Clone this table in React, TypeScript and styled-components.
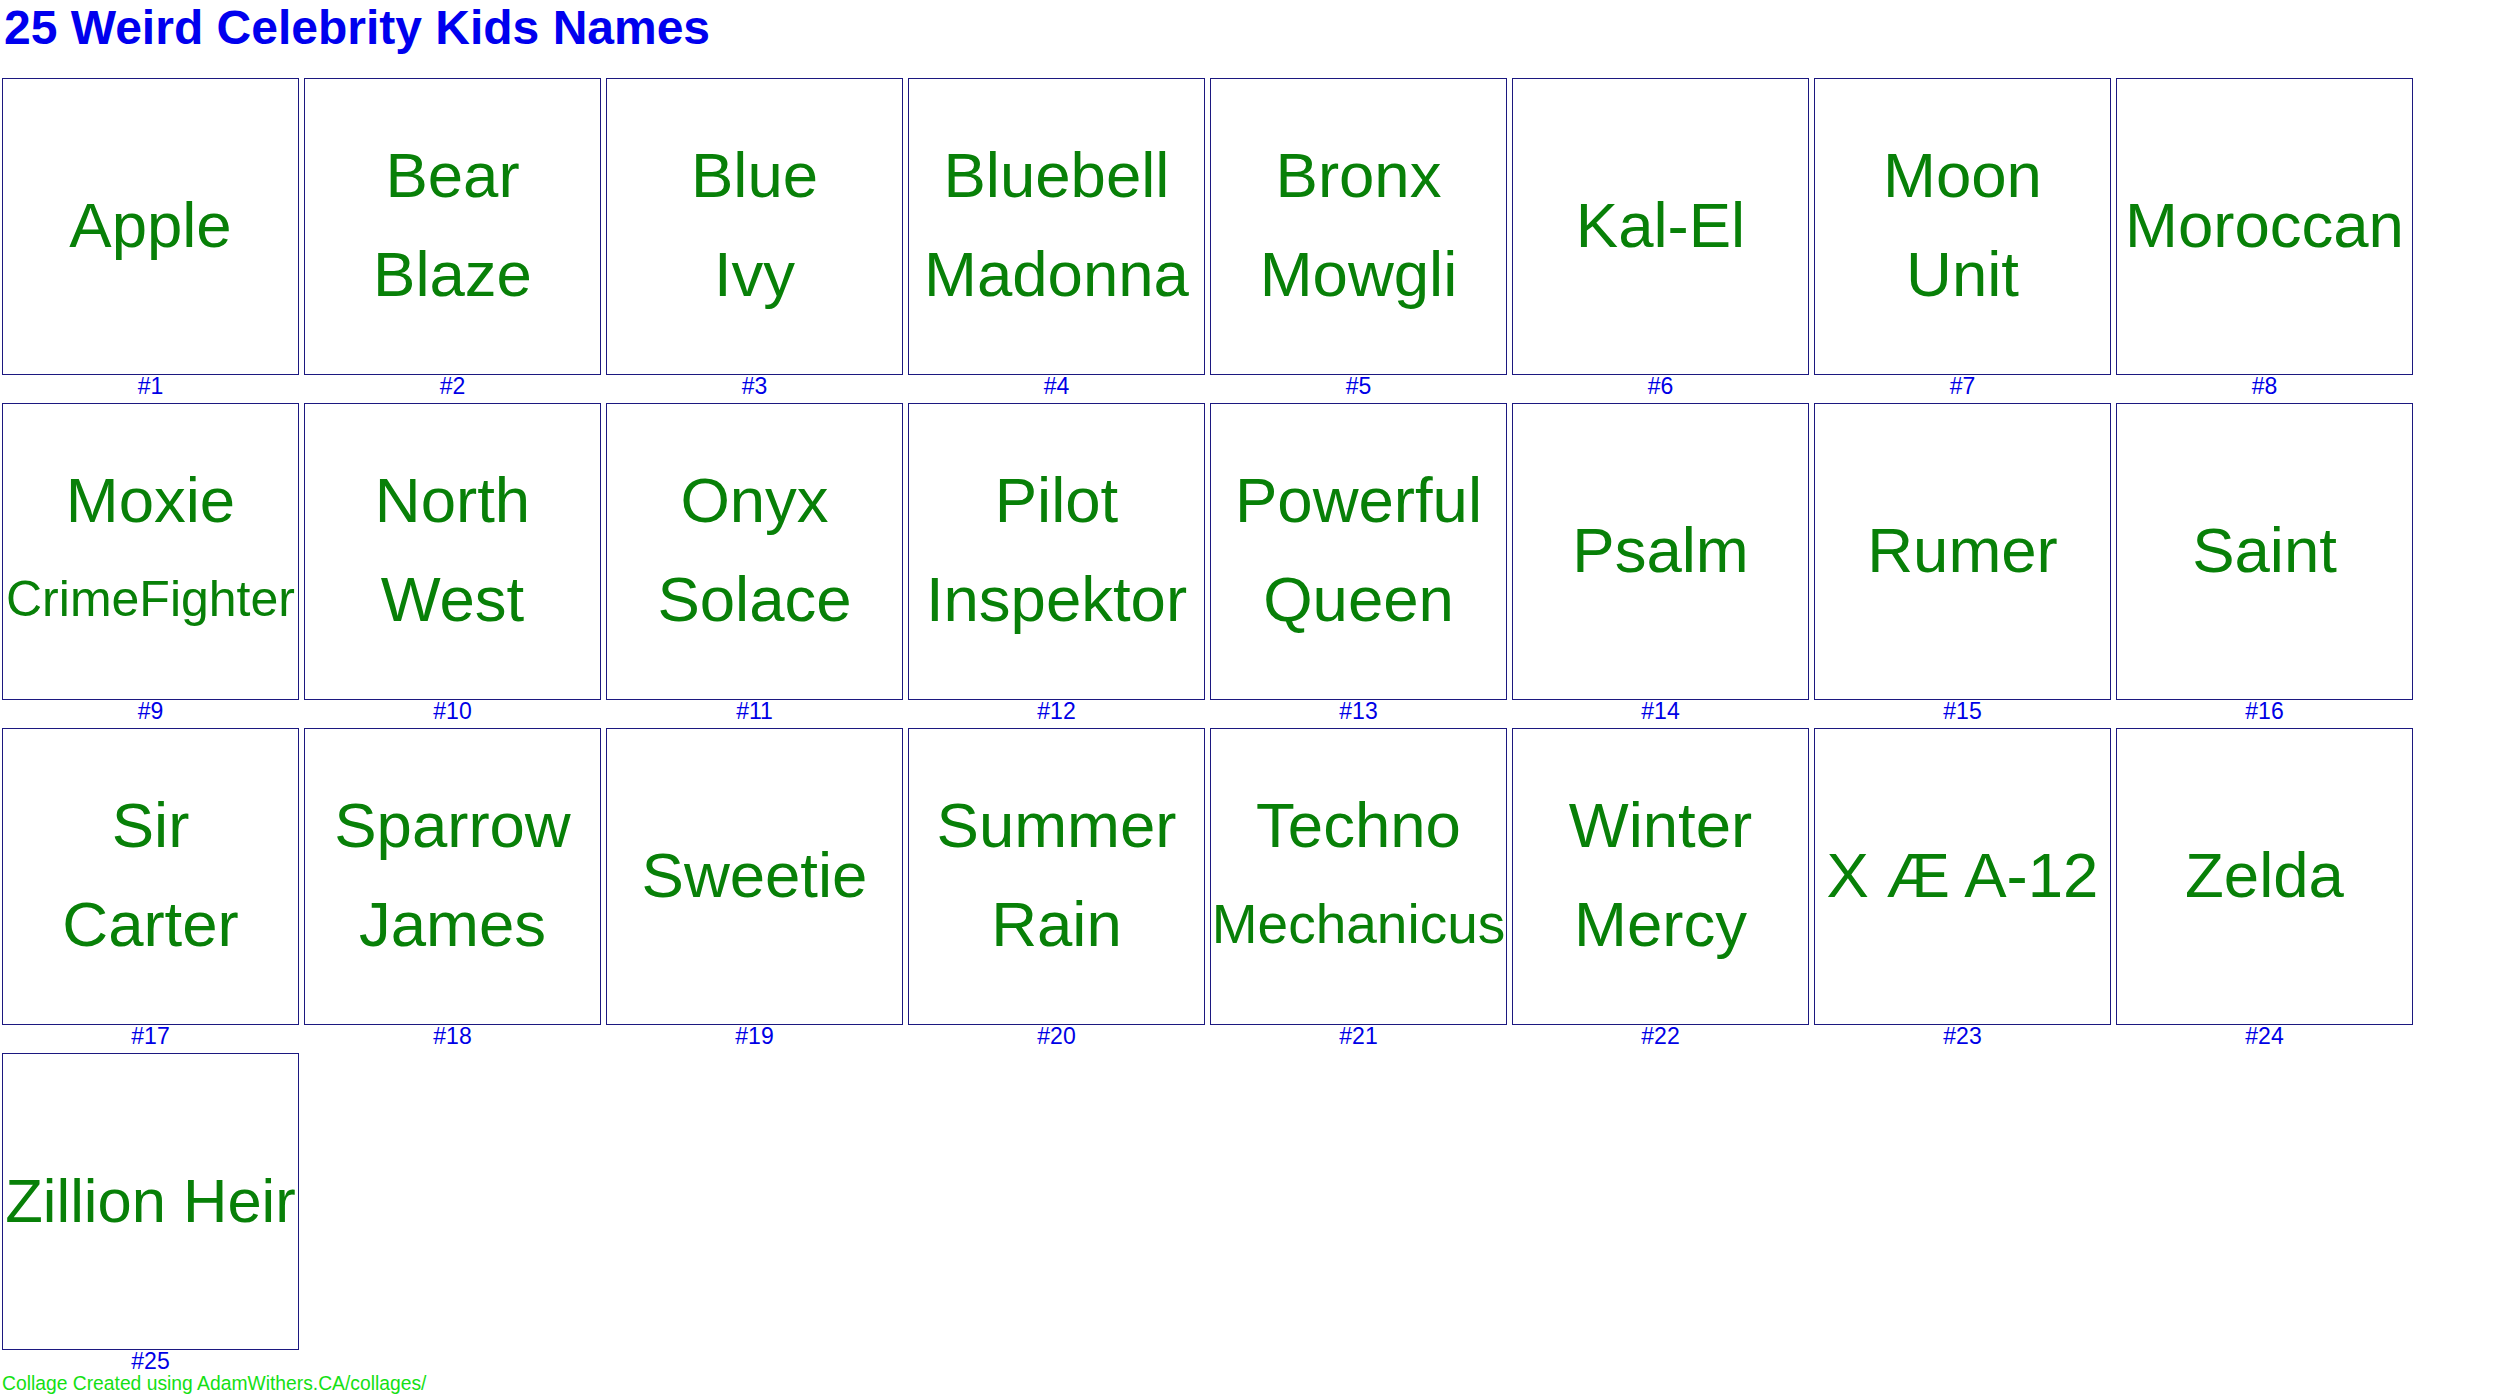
import React from 'react';
import styled, { createGlobalStyle } from 'styled-components';

const GlobalStyle = createGlobalStyle`
  html, body {
    margin: 0;
    padding: 0;
    background: #fff;
  }
  body {
    font-family: 'Liberation Sans', Arial, sans-serif;
  }
`;

interface KidName {
  lines: { text: string; size?: number }[];
}

// sizes only where the generator shrank a line to fit the tile
const NAMES: KidName[] = [
  { lines: [{ text: 'Apple' }] },
  { lines: [{ text: 'Bear' }, { text: 'Blaze' }] },
  { lines: [{ text: 'Blue' }, { text: 'Ivy' }] },
  { lines: [{ text: 'Bluebell' }, { text: 'Madonna' }] },
  { lines: [{ text: 'Bronx' }, { text: 'Mowgli' }] },
  { lines: [{ text: 'Kal-El' }] },
  { lines: [{ text: 'Moon' }, { text: 'Unit' }] },
  { lines: [{ text: 'Moroccan' }] },
  { lines: [{ text: 'Moxie' }, { text: 'CrimeFighter', size: 50 }] },
  { lines: [{ text: 'North' }, { text: 'West' }] },
  { lines: [{ text: 'Onyx' }, { text: 'Solace' }] },
  { lines: [{ text: 'Pilot' }, { text: 'Inspektor' }] },
  { lines: [{ text: 'Powerful' }, { text: 'Queen' }] },
  { lines: [{ text: 'Psalm' }] },
  { lines: [{ text: 'Rumer' }] },
  { lines: [{ text: 'Saint' }] },
  { lines: [{ text: 'Sir' }, { text: 'Carter' }] },
  { lines: [{ text: 'Sparrow' }, { text: 'James' }] },
  { lines: [{ text: 'Sweetie' }] },
  { lines: [{ text: 'Summer' }, { text: 'Rain' }] },
  { lines: [{ text: 'Techno' }, { text: 'Mechanicus', size: 55 }] },
  { lines: [{ text: 'Winter' }, { text: 'Mercy' }] },
  { lines: [{ text: 'X Æ A-12' }] },
  { lines: [{ text: 'Zelda' }] },
  { lines: [{ text: 'Zillion Heir', size: 61.5 }] },
];

export default function App() {
  return (
    <>
      <GlobalStyle />
      <Page>
        <Title>25 Weird Celebrity Kids Names</Title>
        <Grid>
          {NAMES.map((name, i) => (
            <Cell key={i}>
              <Tile>
                {name.lines.map((line) => (
                  <NameLine key={line.text} $size={line.size}>
                    {line.text}
                  </NameLine>
                ))}
              </Tile>
              <Label>#{i + 1}</Label>
            </Cell>
          ))}
        </Grid>
        <Footer>Collage Created using AdamWithers.CA/collages/</Footer>
      </Page>
    </>
  );
}

const Page = styled.div`
  padding: 0 2px;
  font-family: 'Liberation Sans', Arial, sans-serif;
`;

const Title = styled.h1`
  margin: 0 0 23px 2px;
  font-size: 48px;
  font-weight: 700;
  line-height: 55px;
  color: #0000ee;
`;

const Grid = styled.div`
  display: grid;
  grid-template-columns: repeat(8, 297px);
  gap: 5px;
`;

const Cell = styled.div`
  display: flex;
  flex-direction: column;
`;

const Tile = styled.div`
  box-sizing: border-box;
  width: 297px;
  height: 297px;
  padding-bottom: 3px;
  border: 1px solid #1c1880;
  display: flex;
  flex-direction: column;
  align-items: center;
  justify-content: center;
`;

const NameLine = styled.div<{ $size?: number }>`
  font-size: ${({ $size }) => $size ?? 63.5}px;
  line-height: 99px;
  height: 99px;
  color: #088008;
  white-space: nowrap;
  text-align: center;
`;

const Label = styled.div`
  height: 23px;
  line-height: 23px;
  font-size: 23px;
  text-align: center;
  color: #0000e6;
`;

const Footer = styled.div`
  font-size: 19.3px;
  line-height: 21px;
  color: #14e014;
  white-space: nowrap;
`;
